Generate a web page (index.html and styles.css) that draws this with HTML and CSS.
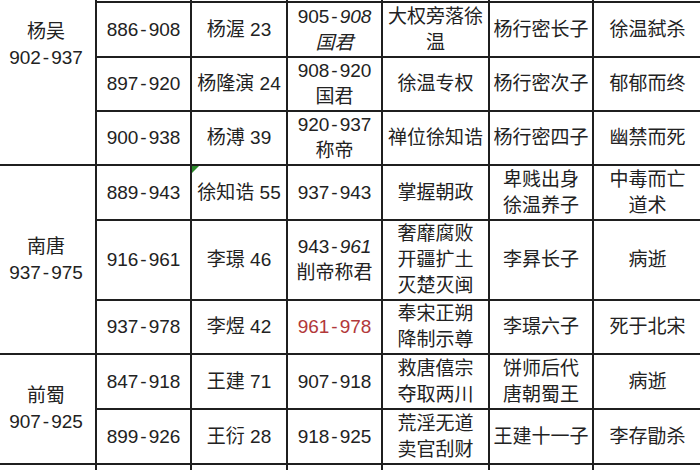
FILE: index.html
```html
<!DOCTYPE html>
<html lang="zh">
<head>
<meta charset="utf-8">
<title>五代十国 君主表</title>
<link rel="stylesheet" href="styles.css">
</head>
<body>
<div class="sheet">
<table class="grid">
  <colgroup>
    <col class="c1"><col class="c2"><col class="c3"><col class="c4"><col class="c5"><col class="c6"><col class="c7">
  </colgroup>
  <tbody>
    <tr class="h-top">
      <td class="group" rowspan="4">杨吴<br>902<span class="dash">-</span>937</td>
      <td></td><td></td><td></td><td></td><td></td><td></td>
    </tr>
    <tr class="h55">
      <td>886<span class="dash">-</span>908</td>
      <td>杨渥 23</td>
      <td>905<span class="dash">-</span><i>908</i><br><i>国君</i></td>
      <td>大权旁落徐<br>温</td>
      <td>杨行密长子</td>
      <td>徐温弑杀</td>
    </tr>
    <tr class="h54">
      <td>897<span class="dash">-</span>920</td>
      <td>杨隆演 24</td>
      <td>908<span class="dash">-</span>920<br>国君</td>
      <td>徐温专权</td>
      <td>杨行密次子</td>
      <td>郁郁而终</td>
    </tr>
    <tr class="h54">
      <td>900<span class="dash">-</span>938</td>
      <td>杨溥 39</td>
      <td>920<span class="dash">-</span>937<br>称帝</td>
      <td>禅位徐知诰</td>
      <td>杨行密四子</td>
      <td>幽禁而死</td>
    </tr>
    <tr class="h55">
      <td class="group" rowspan="3">南唐<br>937<span class="dash">-</span>975</td>
      <td>889<span class="dash">-</span>943</td>
      <td class="flagged">徐知诰 55</td>
      <td>937<span class="dash">-</span>943</td>
      <td>掌握朝政</td>
      <td>卑贱出身<br>徐温养子</td>
      <td>中毒而亡<br>道术</td>
    </tr>
    <tr class="h80">
      <td>916<span class="dash">-</span>961</td>
      <td>李璟 46</td>
      <td>943<span class="dash">-</span><i>961</i><br>削帝称君</td>
      <td>奢靡腐败<br>开疆扩土<br>灭楚灭闽</td>
      <td>李昪长子</td>
      <td>病逝</td>
    </tr>
    <tr class="h53">
      <td>937<span class="dash">-</span>978</td>
      <td>李煜 42</td>
      <td class="red">961<span class="dash">-</span>978</td>
      <td>奉宋正朔<br>降制示尊</td>
      <td>李璟六子</td>
      <td>死于北宋</td>
    </tr>
    <tr class="h55">
      <td class="group" rowspan="2">前蜀<br>907<span class="dash">-</span>925</td>
      <td>847<span class="dash">-</span>918</td>
      <td>王建 71</td>
      <td>907<span class="dash">-</span>918</td>
      <td>救唐僖宗<br>夺取两川</td>
      <td>饼师后代<br>唐朝蜀王</td>
      <td>病逝</td>
    </tr>
    <tr class="h55">
      <td>899<span class="dash">-</span>926</td>
      <td>王衍 28</td>
      <td>918<span class="dash">-</span>925</td>
      <td>荒淫无道<br>卖官刮财</td>
      <td>王建十一子</td>
      <td>李存勖杀</td>
    </tr>
    <tr class="h-bottom">
      <td></td><td></td><td></td><td></td><td></td><td></td><td></td>
    </tr>
  </tbody>
</table>
</div>
</body>
</html>
```

FILE: styles.css
```css
html, body {
  margin: 0;
  padding: 0;
  background: #ffffff;
}

body {
  width: 700px;
  height: 470px;
  overflow: hidden;
}

.sheet {
  margin-top: -76px;
  margin-left: -5px;
}

.grid {
  border-collapse: collapse;
  table-layout: fixed;
  width: 706px;
  font-family: "Liberation Sans", "Noto Sans CJK SC", sans-serif;
  font-size: 19px;
  line-height: 26px;
  color: #222222;
}

.c1 { width: 100px; }
.c2 { width: 95px; }
.c3 { width: 96px; }
.c4 { width: 95px; }
.c5 { width: 107px; }
.c6 { width: 104px; }
.c7 { width: 109px; }

.grid td {
  border: 2px solid #1f1f1f;
  padding: 0 3px;
  text-align: center;
  vertical-align: middle;
  white-space: nowrap;
}

.h-top { height: 77px; }
.h55 { height: 55px; }
.h54 { height: 54px; }
.h53 { height: 53px; }
.h80 { height: 80px; }
.h-bottom { height: 8px; }

.dash {
  margin: 0 2px;
}

.grid i {
  font-style: italic;
}

.red {
  color: #b2383a;
}

.flagged {
  position: relative;
}

.flagged::before {
  content: "";
  position: absolute;
  left: 0;
  top: 0;
  width: 0;
  height: 0;
  border-top: 7px solid #2b8a2b;
  border-right: 7px solid transparent;
}
```
